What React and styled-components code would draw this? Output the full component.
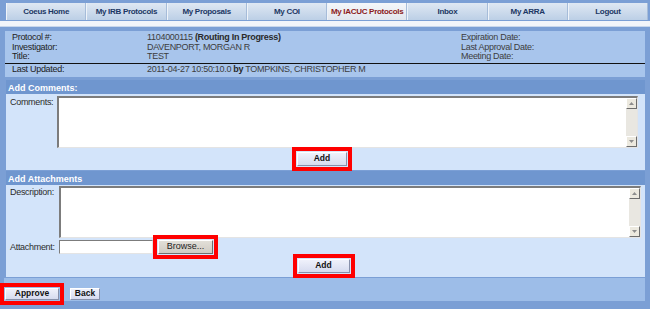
import React from 'react';
import styled, { createGlobalStyle } from 'styled-components';

const GlobalStyle = createGlobalStyle`
  html, body {
    margin: 0;
    padding: 0;
    background: #7b9fd5;
  }
  body {
    font-family: "Liberation Sans", Arial, sans-serif;
  }
`;

const Page = styled.div`
  width: 650px;
  height: 309px;
  box-sizing: border-box;
  overflow: hidden;
  background: #7b9fd5;
  padding-top: 3px;
  display: flex;
  flex-direction: column;
`;

const TabBar = styled.nav`
  display: grid;
  grid-template-columns: repeat(8, 1fr);
  height: 17px;
  margin: 0 2px 0 6px;
  background: linear-gradient(#dfe8f3, #bccfe6);
`;

const Tab = styled.div`
  display: flex;
  align-items: center;
  justify-content: center;
  font: bold 8px/1 "Liberation Sans", Arial, sans-serif;
  letter-spacing: -0.3px;
  color: ${p => (p.$active ? '#8c1b1b' : '#1c3764')};
  background: ${p => (p.$active ? 'linear-gradient(#f5f7fa, #e1e6ee)' : 'transparent')};
  border-left: 1px solid #eef3f9;
  border-right: 1px solid #a6bcd9;
`;

const Band = styled.div`
  height: 5px;
  margin-top: 1px;
  background: #f2f5fa;
  border-bottom: 1px solid #c8d7ec;
`;

const InfoPanel = styled.section`
  margin: 4px 5px 0 5px;
  background: #a8c5ec;
  padding-top: 2px;
`;

const InfoGrid = styled.div`
  display: grid;
  grid-template-columns: 142px 314px 1fr;
  grid-auto-rows: 9.5px;
  padding-bottom: 1px;
  border-bottom: 1px solid #111;
`;

const InfoUpdated = styled.div`
  display: grid;
  grid-template-columns: 142px 1fr;
  height: 13px;
  align-items: center;
`;

const Cell = styled.div`
  font-size: 9px;
  line-height: 9.5px;
  letter-spacing: -0.3px;
  white-space: nowrap;
  color: ${p => (p.$label ? '#222' : '#3d3d3d')};
  padding-left: ${p => (p.$label ? '7px' : '0')};
  b {
    color: #2a2a2a;
  }
`;

const Section = styled.section`
  margin: ${p => p.$top || '0'} 5px 0 6px;
`;

const SectionTitle = styled.h2`
  margin: 0;
  height: 14px;
  box-sizing: border-box;
  padding: 2px 0 0 2px;
  background: #6f96cf;
  color: #fff;
  font: bold 9px/12px "Liberation Sans", Arial, sans-serif;
`;

const SectionBody = styled.div`
  background: #d3e4fa;
  padding: ${p => p.$pad};
  display: flex;
  flex-direction: column;
`;

const FieldRow = styled.div`
  display: flex;
  align-items: ${p => p.$align || 'flex-start'};
  margin-top: ${p => p.$mt || '0'};
`;

const Label = styled.label`
  width: ${p => p.$w}px;
  flex: none;
  box-sizing: border-box;
  padding: ${p => p.$pt || '3px'} 0 0 4px;
  font-size: 9px;
  line-height: 10px;
  letter-spacing: -0.3px;
  color: #2c2c2c;
  white-space: nowrap;
`;

const TextBox = styled.div`
  flex: 1;
  height: 52px;
  box-sizing: border-box;
  display: flex;
  background: #fff;
  border-style: solid;
  border-width: 2px 1px 1px 2px;
  border-color: #7c7c7c #e4e4e4 #e4e4e4 #7c7c7c;
`;

const TextArea = styled.div`
  flex: 1;
`;

const Scrollbar = styled.div`
  width: 11px;
  display: flex;
  flex-direction: column;
  justify-content: space-between;
  background: #e9e7e1;
`;

const ArrowBtn = styled.div`
  height: 11px;
  box-sizing: border-box;
  display: flex;
  align-items: center;
  justify-content: center;
  background: #ece9df;
  border-style: solid;
  border-width: 1px;
  border-color: #fff #6d6d6d #6d6d6d #fff;
`;

const Arrow = ({ down }) => (
  <svg width="5" height="3" viewBox="0 0 5 3">
    <path d={down ? 'M0 0h5L2.5 3z' : 'M0 3h5L2.5 0z'} fill="#8d8d8d" />
  </svg>
);

const Field = () => (
  <TextBox>
    <TextArea />
    <Scrollbar>
      <ArrowBtn>
        <Arrow />
      </ArrowBtn>
      <ArrowBtn>
        <Arrow down />
      </ArrowBtn>
    </Scrollbar>
  </TextBox>
);

const Center = styled.div`
  display: flex;
  justify-content: center;
  margin-top: ${p => p.$mt || '0'};
`;

const Highlight = styled.span`
  position: relative;
  z-index: 1;
  display: inline-flex;
  margin: -5px;
  padding: 1px;
  border: 4px solid #ff0000;
`;

const Button = styled.button`
  width: ${p => p.$w}px;
  height: ${p => p.$h || 14}px;
  padding: 0;
  box-sizing: border-box;
  background: linear-gradient(#eff1fb, #d6dbef);
  border: 1px solid;
  border-color: #ffffff #8790aa #8790aa #ffffff;
  font: bold 8.5px/1 "Liberation Sans", Arial, sans-serif;
  color: #111;
  cursor: pointer;
`;

const BrowseButton = styled.button`
  width: 55px;
  height: 14px;
  padding: 0;
  box-sizing: border-box;
  background: linear-gradient(#e2dfd8, #cfcbc3);
  border: 1px solid;
  border-color: #ffffff #6f6f6f #6f6f6f #ffffff;
  font: 9px/1 "Liberation Sans", Arial, sans-serif;
  color: #222;
`;

const FileInput = styled.div`
  width: 94px;
  height: 14px;
  box-sizing: border-box;
  background: #fff;
  border-style: solid;
  border-width: 1px;
  border-color: #7c7c7c #e4e4e4 #e4e4e4 #7c7c7c;
  margin-right: 5px;
`;

const BottomBar = styled.footer`
  margin: 1px 5px 0 4px;
  height: 23px;
  box-sizing: border-box;
  padding: 10px 0 0 1px;
  background: #9dbde8;
  display: flex;
  gap: 11px;
  align-items: flex-start;
`;

const tabs = [
  'Coeus Home',
  'My IRB Protocols',
  'My Proposals',
  'My COI',
  'My IACUC Protocols',
  'Inbox',
  'My ARRA',
  'Logout',
];

export default function App() {
  return (
    <>
      <GlobalStyle />
      <Page>
        <TabBar>
          {tabs.map(t => (
            <Tab key={t} $active={t === 'My IACUC Protocols'}>
              {t}
            </Tab>
          ))}
        </TabBar>
        <Band />

        <InfoPanel>
          <InfoGrid>
            <Cell $label>Protocol #:</Cell>
            <Cell>
              1104000115 <b>(Routing In Progress)</b>
            </Cell>
            <Cell>Expiration Date:</Cell>
            <Cell $label>Investigator:</Cell>
            <Cell>DAVENPORT, MORGAN R</Cell>
            <Cell>Last Approval Date:</Cell>
            <Cell $label>Title:</Cell>
            <Cell>TEST</Cell>
            <Cell>Meeting Date:</Cell>
          </InfoGrid>
          <InfoUpdated>
            <Cell $label>Last Updated:</Cell>
            <Cell>
              2011-04-27 10:50:10.0 <b>by</b> TOMPKINS, CHRISTOPHER M
            </Cell>
          </InfoUpdated>
        </InfoPanel>

        <Section $top="3px">
          <SectionTitle>Add Comments:</SectionTitle>
          <SectionBody $pad="2px 7px 4px 0">
            <FieldRow>
              <Label $w={51} $pt="1px">Comments:</Label>
              <Field />
            </FieldRow>
            <Center $mt="4px">
              <Highlight>
                <Button $w={50}>Add</Button>
              </Highlight>
            </Center>
          </SectionBody>
        </Section>

        <Section $top="1px">
          <SectionTitle>Add Attachments</SectionTitle>
          <SectionBody $pad="1px 4px 4px 0">
            <FieldRow>
              <Label $w={53} $pt="1px">Description:</Label>
              <Field />
            </FieldRow>
            <FieldRow $align="center" $mt="2px">
              <Label $w={53} $pt="0">Attachment:</Label>
              <FileInput />
              <Highlight>
                <BrowseButton>Browse...</BrowseButton>
              </Highlight>
            </FieldRow>
            <Center $mt="5px">
              <Highlight>
                <Button $w={52}>Add</Button>
              </Highlight>
            </Center>
          </SectionBody>
        </Section>

        <BottomBar>
          <Highlight>
            <Button $w={54} $h={12}>Approve</Button>
          </Highlight>
          <Button $w={30} $h={12}>Back</Button>
        </BottomBar>
      </Page>
    </>
  );
}
